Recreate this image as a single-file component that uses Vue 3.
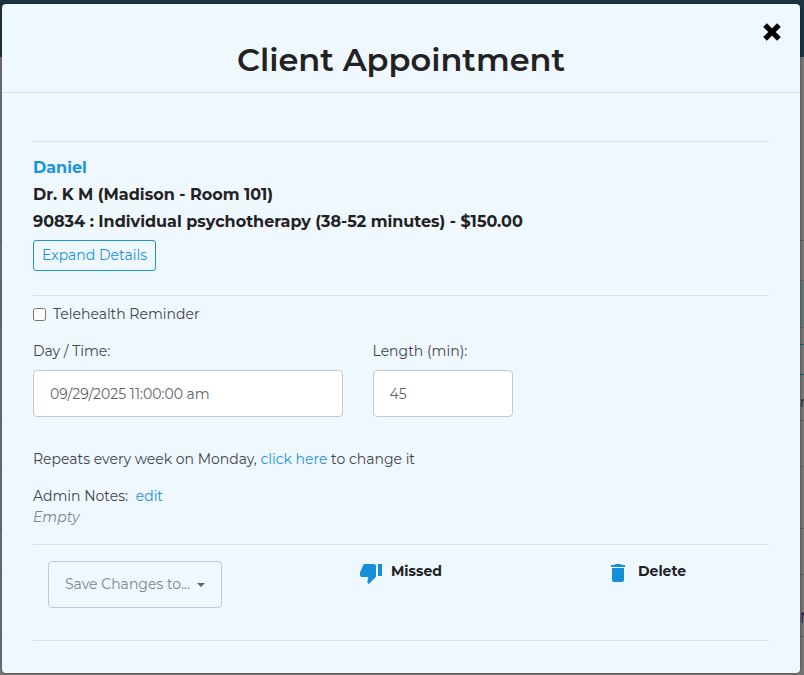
<template>
  <div class="page">
    <div class="schedule" aria-hidden="true">
      <div class="schedule-nav"></div>
      <div
        v-for="(row, index) in scheduleRows"
        :key="index"
        :class="['schedule-row', { today: row.today }]"
        :style="{ height: row.height + 'px' }"
      >
        <span v-if="row.button" class="schedule-button"></span>
        <span v-if="row.text" :class="['schedule-text', row.color]">{{ row.text }}</span>
      </div>
    </div>

    <section class="modal" role="dialog" aria-modal="true" aria-labelledby="modal-title">
      <header class="modal-header">
        <h1 id="modal-title">Client Appointment</h1>
        <button type="button" class="close" aria-label="Close">
          <svg viewBox="0 0 16 16" width="18" height="18">
            <path d="M3.5 0.6 L8 5.1 L12.5 0.6 L15.4 3.5 L10.9 8 L15.4 12.5 L12.5 15.4 L8 10.9 L3.5 15.4 L0.6 12.5 L5.1 8 L0.6 3.5 Z" stroke="#000" stroke-width="0.8" stroke-linejoin="round" />
          </svg>
        </button>
      </header>

      <div class="modal-body">
        <div class="section summary">
          <a href="#" class="client">Daniel</a>
          <p>Dr. K M (Madison - Room 101)</p>
          <p>90834 : Individual psychotherapy (38-52 minutes) - $150.00</p>
          <button type="button" class="btn-expand">Expand Details</button>
        </div>

        <div class="section details">
          <label class="check">
            <input v-model="telehealth" type="checkbox">
            <span>Telehealth Reminder</span>
          </label>

          <div class="fields">
            <div class="field">
              <label for="day-time">Day / Time:</label>
              <input id="day-time" v-model="dayTime" type="text">
            </div>
            <div class="field">
              <label for="length">Length (min):</label>
              <input id="length" v-model="length" type="text">
            </div>
          </div>

          <p class="repeats">Repeats every week on Monday, <a href="#">click here</a> to change it</p>
          <p>Admin Notes: <a href="#" class="edit">edit</a></p>
          <p class="empty">Empty</p>
        </div>

        <div class="section actions">
          <div class="action-save">
            <button type="button" class="btn-save">
              Save Changes to...
              <span class="caret"></span>
            </button>
          </div>
          <div>
            <button type="button" class="action">
              <svg viewBox="0 0 24 24" width="24" height="24">
                <path d="M15 3H6c-.83 0-1.54.5-1.84 1.22l-3.02 7.05c-.09.23-.14.47-.14.73v2c0 1.1.9 2 2 2h6.31l-.95 4.57-.03.32c0 .41.17.79.44 1.06L9.83 23l6.59-6.59c.36-.36.58-.86.58-1.41V5c0-1.1-.9-2-2-2zm4 0v12h4V3h-4z" />
              </svg>
              Missed
            </button>
          </div>
          <div>
            <button type="button" class="action">
              <svg viewBox="0 0 24 24" width="24" height="24">
                <path d="M6 19c0 1.1.9 2 2 2h8c1.1 0 2-.9 2-2V7H6v12zM19 4h-3.5l-1-1h-5l-1 1H5v2h14V4z" />
              </svg>
              Delete
            </button>
          </div>
        </div>
      </div>
    </section>
  </div>
</template>

<script setup>
import { ref } from 'vue';

const telehealth = ref(false);
const dayTime = ref('09/29/2025 11:00:00 am');
const length = ref('45');

const scheduleRows = [
  { height: 184 },
  { height: 40 },
  { height: 47, today: true },
  { height: 93, button: true, text: 'm', color: 'dark' },
  { height: 46 },
  { height: 62 },
  { height: 46 },
  { height: 62, text: 'N', color: 'purple' },
];
</script>

<style>
body {
  margin: 0;
  background: #767676;
}
</style>

<style scoped>
* {
  box-sizing: border-box;
}

.page {
  position: relative;
  min-height: 100vh;
  padding: 4px 4px 2px 2px;
  overflow: hidden;
  font-family: Montserrat, Inter, sans-serif;
  font-size: 14px;
  line-height: 21px;
  color: #41464b;
}

/* dimmed schedule behind the dialog */
.schedule {
  position: absolute;
  inset: 0;
  overflow: hidden;
}

.schedule-nav {
  height: 57px;
  background: #1f3542;
}

.schedule-row {
  display: flex;
  flex-direction: column;
  align-items: flex-end;
  padding: 16px 0 8px;
  border-bottom: 1px solid #626262;
}

.schedule-row.today {
  background: #667476;
}

.schedule-button {
  width: 20px;
  height: 31px;
  border: solid #16597f;
  border-width: 1px 0;
}

.schedule-text {
  width: 4px;
  margin-top: auto;
  overflow: hidden;
  line-height: 20px;
}

.dark {
  color: #222;
}

.purple {
  color: #2b1740;
}

.modal {
  position: relative;
  min-height: calc(100vh - 6px);
  background: #eff7ff;
  border-radius: 4px;
  box-shadow: 0 0 3px rgba(0, 0, 0, 0.5);
}

.modal-header {
  position: relative;
  padding: 32px 16px 8px;
  border-bottom: 1px solid #d9e1e8;
  text-align: center;
}

h1 {
  margin: 0;
  font-size: 32px;
  font-weight: 600;
  line-height: 48px;
  color: #222;
}

.close {
  position: absolute;
  top: 19px;
  right: 19px;
  padding: 0;
  border: 0;
  background: none;
  cursor: pointer;
}

.close svg {
  display: block;
}

.modal-body {
  padding: 48px 31px 32px;
}

.section {
  border-top: 1px solid #d9e1e8;
}

p {
  margin: 0;
}

a {
  color: #1c93dd;
  text-decoration: none;
}

button,
input {
  font: inherit;
}

.summary {
  padding: 12px 0 24px;
  font-size: 16px;
  font-weight: 700;
  line-height: 27px;
  color: #222;
}

.client {
  display: block;
}

.btn-expand {
  display: block;
  height: 31px;
  margin-top: 5px;
  padding: 0 8px;
  border: 1px solid #1c93dd;
  border-radius: 3px;
  background: none;
  font-size: 14px;
  font-weight: 400;
  line-height: 21px;
  color: #1c93dd;
}

.details {
  padding: 8px 0 16px;
}

.check {
  display: flex;
  align-items: center;
  gap: 7px;
}

.check input {
  width: 13px;
  height: 13px;
  margin: 0;
}

.fields {
  display: grid;
  grid-template-columns: 310fr 141fr 226fr;
  gap: 30px;
  margin: 16px 0 32px;
}

.field label {
  display: block;
  margin-bottom: 8px;
}

.field input {
  display: block;
  width: 100%;
  height: 47px;
  padding: 0 16px;
  border: 1px solid #c6c9cc;
  border-radius: 4px;
  background: #fff;
  color: #5c6269;
}

.repeats {
  margin-bottom: 16px;
}

.edit {
  margin-left: 4px;
}

.empty {
  font-style: italic;
  color: #7c858d;
}

.actions {
  display: grid;
  grid-template-columns: 326fr 247fr 163fr;
  padding: 16px 0 32px;
  border-bottom: 1px solid #d9e1e8;
}

.action-save {
  padding-left: 15px;
}

.btn-save {
  display: flex;
  align-items: center;
  gap: 7px;
  height: 47px;
  padding: 0 16px;
  border: 1px solid #c6c9cc;
  border-radius: 4px;
  background: none;
  color: #7c858d;
}

.caret {
  border: 4px solid transparent;
  border-top-color: #5c6269;
  border-bottom: 0;
}

.action {
  display: flex;
  align-items: flex-start;
  gap: 8px;
  padding: 0;
  border: 0;
  background: none;
  font-weight: 700;
  line-height: 21px;
  color: #222;
}

.action svg {
  fill: #168fdb;
}
</style>
